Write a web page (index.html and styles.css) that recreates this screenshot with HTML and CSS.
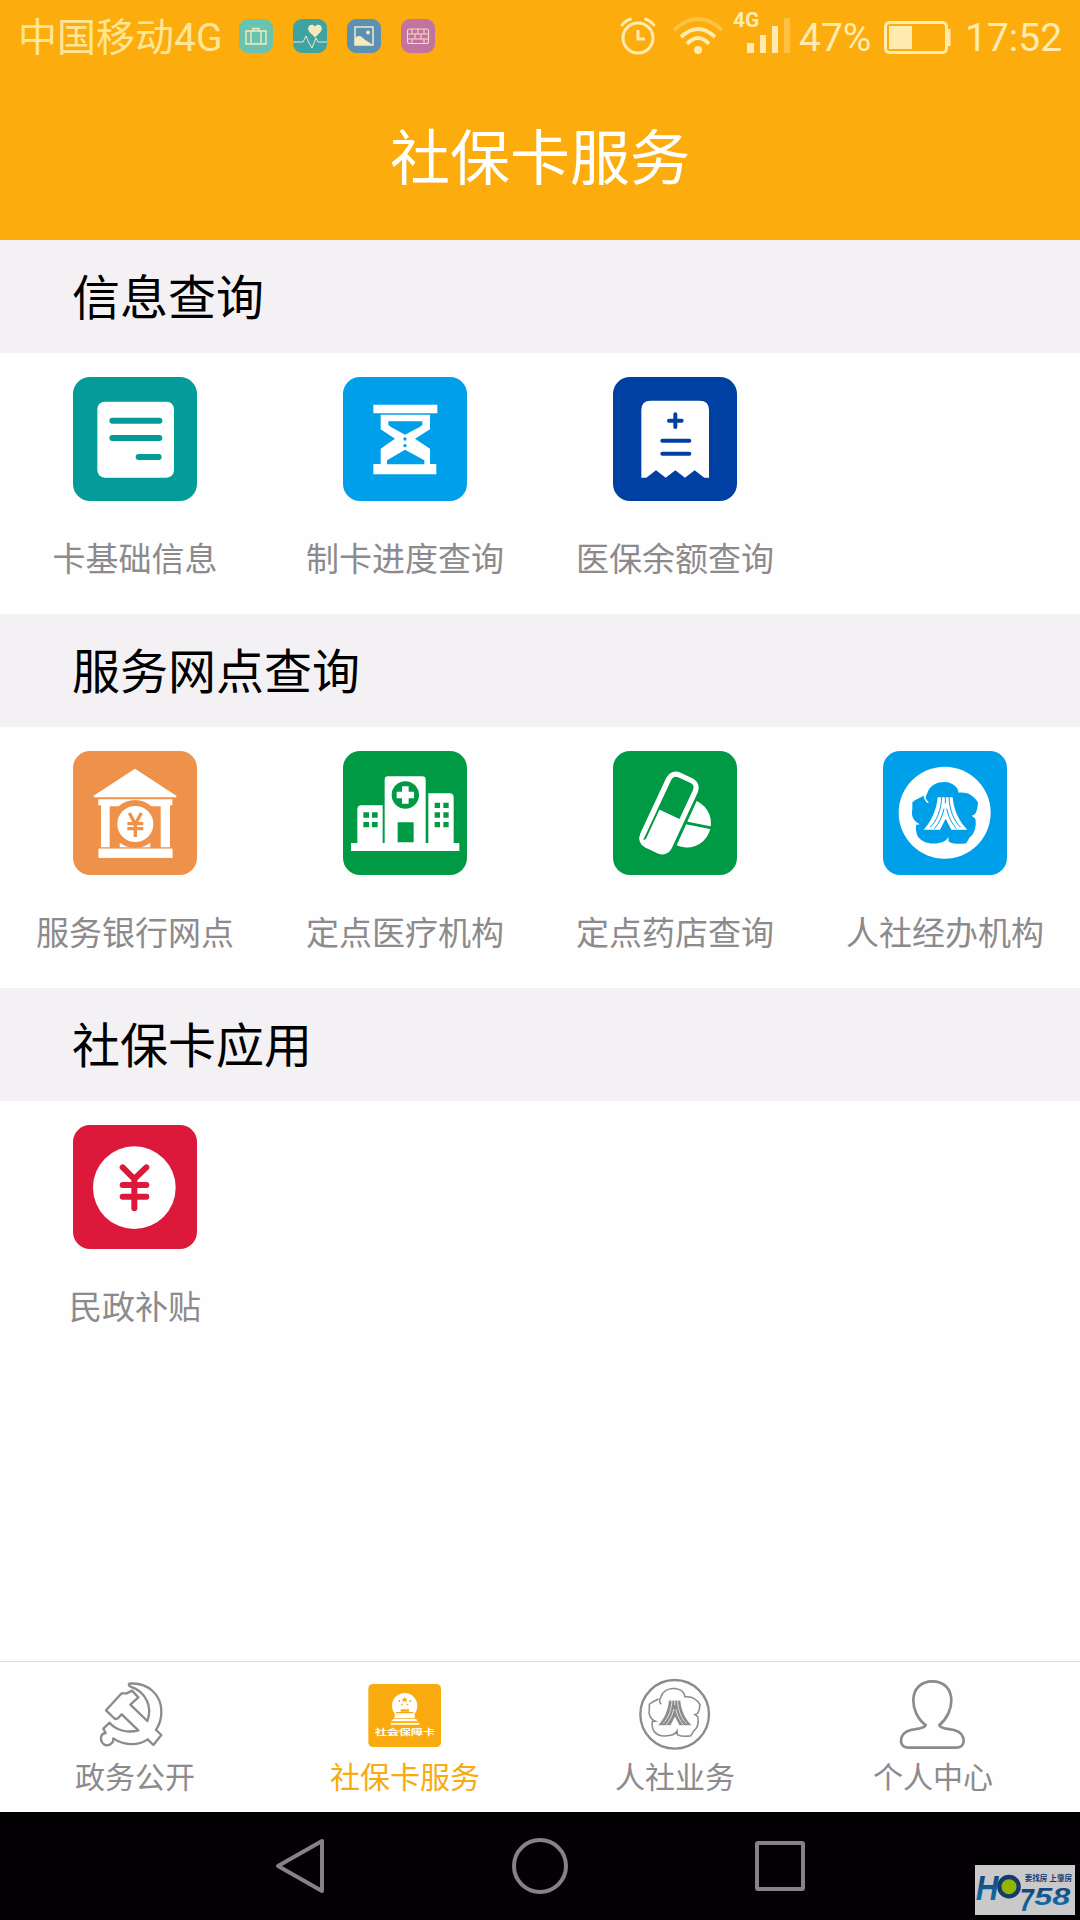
FILE: index.html
```
<!DOCTYPE html>
<html lang="zh-CN">
<head>
    <meta charset="UTF-8">
    <meta name="viewport" content="width=device-width, initial-scale=1.0">
    <title>社保卡服务</title>
    <link rel="stylesheet" href="styles.css">
</head>
<body>

    <!-- 公用图形 -->
    <svg class="defs" width="0" height="0">
        <symbol id="flower" viewBox="0 0 372 372" overflow="visible">
            <path d="M133 153 C125 143 126 134 131 128 C139 98 166 90 189 92 C207 95 224 106 226 124 C248 121 270 129 285 155 C281 161 284 169 280 177 C278 187 273 192 265 193 L276 202 C280 225 274 247 259 258 L249 276 C231 279 209 278 196 271 L195 257 C190 267 182 272 170 274 C145 280 118 277 103 255 C98 242 96 229 99 220 L110 219 C89 209 83 193 87 172 L87 153 C97 143 110 141 122 132"/>
        </symbol>
        <symbol id="mountain" viewBox="0 0 372 372" overflow="visible">
            <path d="M163 138 H208 C211 174 226 210 252 235 H204 L187 202 L170 235 H121 C145 210 160 174 163 138Z"/>
            <path class="ridge" d="M175 137 C174 175 160 210 140 228 M197 137 C198 175 212 210 232 228 M186 137 V156 M182 172 C176 200 165 217 153 232 M190 172 C196 200 207 217 219 232"/>
        </symbol>
    </svg>

    <!-- 顶部 -->
    <header>
        <div class="status-bar">
            <span class="carrier">中国移动4G</span>
            <div class="notices">
                <svg viewBox="0 0 34 34">
                    <rect width="34" height="34" rx="9" fill="#68c4b0"/>
                    <path d="M7 12h20v13H7z M12 12v13 M22 12v13 M14 12v-2.500h6v2.500" fill="none" stroke="#f5e9bd" stroke-width="1.400"/>
                </svg>
                <svg viewBox="0 0 34 34">
                    <rect width="34" height="34" rx="9" fill="#3fa3a4"/>
                    <path d="M22 18.500 L16.500 13 C12.500 8 18.500 3 22 7.500 C25.500 3 31.500 8 27.500 13Z" fill="#f5e9bd"/>
                    <path d="M0 23h10l3-6 3 7 3 5 4-10 2 4h9" fill="none" stroke="#f5e9bd" stroke-width="1"/>
                </svg>
                <svg viewBox="0 0 34 34">
                    <rect width="34" height="34" rx="9" fill="#5b91b5"/>
                    <rect x="8" y="8" width="18" height="18" fill="none" stroke="#f5e9bd" stroke-width="1.500"/>
                    <path d="M8 26v-7c4-4 7-1 9 1l9 6z" fill="#f5e9bd"/>
                    <circle cx="21" cy="13.500" r="1.900" fill="#f5e9bd"/>
                </svg>
                <svg viewBox="0 0 34 34">
                    <rect width="34" height="34" rx="9" fill="#c274a0"/>
                    <path d="M8.500 10h17q2 0 2 2v10.500q0 2-2 2h-17q-2 0-2-2V12q0-2 2-2z M6.500 15h21 M6.500 20h21 M11 10v5 M17 10v5 M23 10v5 M14 15v5 M20 15v5 M11 20v4.500 M23 20v4.500" fill="none" stroke="#f7d9c4" stroke-width="1.100"/>
                </svg>
            </div>
            <div class="status-right">
                <svg class="alarm" viewBox="0 0 36 38" fill="none" stroke="#ffebb0" stroke-width="3">
                    <circle cx="18" cy="21" r="15"/>
                    <path d="M18 13v9h7" stroke-width="3"/>
                    <path d="M1.500 9 Q5 3.500 11.500 1.800 M34.500 9 Q31 3.500 24.500 1.800"/>
                </svg>
                <svg class="wifi" viewBox="0 0 50 38" fill="none" stroke="#ffebb0" stroke-width="4">
                    <path d="M1 13 Q25-9 49 13" opacity=".35"/>
                    <path d="M8 20 Q25 4 42 20"/>
                    <path d="M14 27 Q25 15 36 27"/>
                    <circle cx="25" cy="33" r="4" fill="#ffebb0" stroke="none"/>
                </svg>
                <div class="signal">
                    <span>4G</span>
                    <svg viewBox="0 0 46 38" fill="#ffebb0">
                        <rect x="1" y="26" width="7" height="10"/>
                        <rect x="14" y="18" width="6" height="18"/>
                        <rect x="26" y="9" width="6" height="27"/>
                        <rect x="38" y="1" width="6" height="35" opacity=".35"/>
                    </svg>
                </div>
                <span class="percent">47%</span>
                <svg class="battery" viewBox="0 0 68 34">
                    <rect x="1.500" y="1.500" width="61" height="30" rx="4" fill="none" stroke="#ffebb0" stroke-width="3"/>
                    <rect x="5" y="5" width="23" height="23" fill="#ffebb0"/>
                    <path d="M64 8h2.500v17H64z" fill="#ffebb0"/>
                </svg>
                <span class="time">17:52</span>
            </div>
        </div>
        <h1>社保卡服务</h1>
    </header>

    <!-- 内容 -->
    <main>
        <h2>信息查询</h2>
        <div class="menu">
            <a class="item">
                <svg class="tile teal" viewBox="-1 -2 372 372">
                    <rect x="72" y="72" width="230" height="228" rx="22" fill="#fff"/>
                    <path d="M117 129H258 M117 181H258 M196 238H256" stroke="#049c98" stroke-width="18" stroke-linecap="round"/>
                </svg>
                <span>卡基础信息</span>
            </a>
            <a class="item">
                <svg class="tile blue" viewBox="-1 -2 372 372">
                    <path d="M90 81h192v26H90z M90 259h189v31H90z M112 111H260V155L215 183L260 213V259H112V213L155 183L112 155z" fill="#fff"/>
                    <path d="M135 131H237V142L229 148L185 171L143 148L135 142z M131 260V248L185 216L243 248V260z" fill="#009fe9"/>
                    <circle cx="185" cy="184" r="5" fill="#009fe9"/>
                    <circle cx="185" cy="204" r="5" fill="#009fe9"/>
                </svg>
                <span>制卡进度查询</span>
            </a>
            <a class="item">
                <svg class="tile navy" viewBox="-2 -2 372 372">
                    <path d="M83 300V97q0-28 28-28H258q28 0 28 28V300H272L243 278L214 300L185 278L156 300L127 278L98 300z" fill="#fff"/>
                    <path d="M185 110V148 M166 129H204 M146 189H227 M146 228H227" stroke="#0040a3" stroke-width="12" stroke-linecap="round"/>
                </svg>
                <span>医保余额查询</span>
            </a>
        </div>

        <h2>服务网点查询</h2>
        <div class="menu">
            <a class="item">
                <svg class="tile orange" viewBox="-2 -2 372 372">
                    <path d="M184 51L308 132V137H60V132z M74 143H296V161H289V287H261V164H108V287H82V161H74z M75 291H296V318H75z M138 287V275H230V287z" fill="#fff"/>
                    <circle cx="184" cy="217" r="72" fill="#ee914a"/>
                    <path d="M75 291H296V318H75z" fill="#fff"/>
                    <circle cx="185" cy="217" r="54" fill="#fff"/>
                    <path d="M167 184L185 217L203 184 M185 214V256 M161 216H209 M161 231H209" fill="none" stroke="#ee914a" stroke-width="10"/>
                </svg>
                <span>服务银行网点</span>
            </a>
            <a class="item">
                <svg class="tile green" viewBox="-1 -1 372 372">
                    <path d="M23 275H42V174q0-12 12-12H118V275H124V85q0-10 10-10H237q10 0 10 10V275H255V126H319q12 0 12 12V275H348V299H23z" fill="#fff"/>
                    <circle cx="186" cy="131" r="41" fill="#009a44"/>
                    <path d="M186 105V157 M160 131H212" stroke="#fff" stroke-width="20"/>
                    <path d="M163 213h48v60h-48z M60 183h17v16H60z M86 183h17v16H86z M60 212h17v16H60z M86 212h17v16H86z M274 154h16v16h-16z M300 154h16v16h-16z M274 183h16v16h-16z M300 183h16v16h-16z M274 212h16v16h-16z M300 212h16v16h-16z" fill="#009a44"/>
                </svg>
                <span>定点医疗机构</span>
            </a>
            <a class="item">
                <svg class="tile green" viewBox="-1 -1 372 372">
                    <path d="M250 149A72 72 0 0 1 190 282z" fill="#fff"/>
                    <path d="M215 214L305 232" stroke="#009a44" stroke-width="8"/>
                    <g transform="translate(167 185) rotate(25)">
                        <rect x="-52" y="-124" width="104" height="248" rx="31" fill="#fff"/>
                        <path d="M-36 3V-92q0-17 17-17H19q17 0 17 17V3z M-36 0h6V98q-1 7-6 7z" fill="#009a44"/>
                    </g>
                </svg>
                <span>定点药店查询</span>
            </a>
            <a class="item">
                <svg class="tile blue" viewBox="-1 -1 372 372">
                    <circle cx="184" cy="184" r="138" fill="#fff"/>
                    <use href="#flower" width="372" height="372" fill="#009fe9"/>
                    <path d="M122 131C124 141 129 150 135 154" fill="none" stroke="#fff" stroke-width="4"/>
                    <use class="on-blue" href="#mountain" width="372" height="372" fill="#fff"/>
                </svg>
                <span>人社经办机构</span>
            </a>
        </div>

        <h2>社保卡应用</h2>
        <div class="menu">
            <a class="item">
                <svg class="tile red" viewBox="-2 -2 372 372">
                    <circle cx="182" cy="186" r="124" fill="#fff"/>
                    <path d="M147 125L182 160L218 125 M182 160V248 M147 178H218 M147 213H218" fill="none" stroke="#dc183b" stroke-width="18" stroke-linecap="round"/>
                </svg>
                <span>民政补贴</span>
            </a>
        </div>
    </main>

    <!-- 底部菜单 -->
    <footer>
        <a class="tab">
            <svg viewBox="0 0 222 216" fill="none" stroke="#8c8a8c" stroke-width="7" stroke-linejoin="round">
                <path d="M46 181C77 203 121 204 149 184L166 201L190 171L174 156C184 141 190 123 190 103C192 52 150 12 94 17Q90 21 96 25C147 42 163 89 148 129L97 80L121 58L102 38L86 46L71 46L24 97L51 123L60 121L71 109L121 157C84 167 51 154 35 134L16 152L23 165C15 166 9 171 9 180C8 191 15 201 26 202C37 202 47 194 46 181Z"/>
            </svg>
            <span>政务公开</span>
        </a>
        <a class="tab active">
            <svg viewBox="0 0 222 216">
                <rect x="1" y="18" width="218" height="189" rx="14" fill="#f8aa0f"/>
                <circle cx="110" cy="83" r="38" fill="#fff"/>
                <path d="M80 104H140V120H80z M76 122H144L150 132H70z M68 135H154V140H68z" fill="#fff"/>
                <path d="M84 104H136 M72 132H148" stroke="#f8aa0f" stroke-width="4"/>
                <path d="M110 56l3 6h7l-5 4 2 7-7-4-7 4 2-7-5-4h7z M91 67h5v5h-5z M124 67h5v5h-5z M100 77h5v5h-5z M116 77h5v5h-5z M98 94h25v7H98z" fill="#f8aa0f"/>
                <text x="21" y="172" class="card-text" textLength="180" lengthAdjust="spacingAndGlyphs">社会保障卡</text>
            </svg>
            <span>社保卡服务</span>
        </a>
        <a class="tab">
            <svg viewBox="0 0 222 216">
                <circle cx="110" cy="109" r="103" fill="none" stroke="#8c8a8c" stroke-width="7"/>
                <g transform="translate(-33 -39) scale(.77)">
                    <use href="#flower" width="372" height="372" fill="none" stroke="#8c8a8c" stroke-width="6"/>
                    <use class="on-white" href="#mountain" width="372" height="372" fill="#8c8a8c"/>
                </g>
            </svg>
            <span>人社业务</span>
        </a>
        <a class="tab last">
            <svg viewBox="0 0 222 216" fill="none" stroke="#8c8a8c" stroke-width="8">
                <path d="M89 141C63 122 52 91 52 68C52 32 75 10 109 10C143 10 166 32 166 68C166 91 154 122 130 141Q131 147 146 151L174 156C194 161 203 175 203 190C203 202 194 209 180 209H38C24 209 15 202 15 190C15 175 24 161 44 156L72 151Q87 147 89 141Z"/>
            </svg>
            <span>个人中心</span>
        </a>
    </footer>

    <!-- 系统导航键 -->
    <nav>
        <svg viewBox="0 0 56 60"><path d="M6 30L50 5V55Z"/></svg>
        <svg viewBox="0 0 56 60"><circle cx="28" cy="30" r="26"/></svg>
        <svg viewBox="0 0 56 60"><rect x="5" y="7" width="46" height="46" rx="1"/></svg>
        <svg class="logo" viewBox="0 0 300 150">
            <defs>
                <linearGradient id="logoBlue" x1="0" y1="0" x2="0" y2="1">
                    <stop offset="0" stop-color="#153a6f"/>
                    <stop offset="1" stop-color="#0f78b4"/>
                </linearGradient>
            </defs>
            <text class="logo-h" x="2" y="104" textLength="68" lengthAdjust="spacingAndGlyphs">H</text>
            <circle cx="102" cy="65" r="29" fill="#93b400" stroke="#153a6f" stroke-width="13"/>
            <text class="logo-7" x="134" y="138" textLength="42" lengthAdjust="spacingAndGlyphs">7</text>
            <text class="logo-58" x="178" y="119" textLength="108" lengthAdjust="spacingAndGlyphs">58</text>
            <text class="logo-text" x="149" y="47" textLength="142" lengthAdjust="spacingAndGlyphs">要找房 上肇房</text>
        </svg>
    </nav>

</body>
</html>
```

FILE: styles.css
```
* {
    box-sizing: border-box;
}
body {
    font-family: Roboto, "Noto Sans CJK SC", sans-serif;
    margin: 0;
    padding: 0;
    height: 1920px;
    display: flex;
    flex-direction: column;
    background-color: #fefefe;
    overflow: hidden;
}
svg {
    display: block;
    flex-shrink: 0;
}
.defs {
    position: absolute;
}
header {
    height: 240px;
    background-color: #fcac0c;
    color: white;
}
.status-bar {
    display: flex;
    align-items: center;
    height: 72px;
    padding: 0 18px;
    color: #ffebb0;
    line-height: 72px;
    white-space: nowrap;
}
.carrier {
    font-size: 39px;
    width: 221px;
    padding-top: 4px;
    color: #ffe696;
}
.notices {
    display: flex;
    gap: 20px;
}
.notices svg {
    width: 34px;
    height: 34px;
}
.status-right {
    display: flex;
    align-items: center;
    margin-left: auto;
}
.alarm {
    width: 36px;
    height: 38px;
    margin-right: 17px;
}
.wifi {
    width: 50px;
    height: 38px;
    margin-right: 23px;
}
.signal {
    position: relative;
    width: 46px;
    margin-right: 7px;
}
.signal svg {
    width: 46px;
    height: 38px;
}
.signal span {
    position: absolute;
    left: -13px;
    top: -7px;
    font-size: 21px;
    font-weight: 700;
    line-height: 20px;
}
.percent {
    width: 85px;
    padding-top: 4px;
    font-size: 39px;
}
.battery {
    width: 68px;
    height: 34px;
    margin: 3px 13px 0 0;
}
.time {
    width: 97px;
    padding-top: 4px;
    font-size: 39px;
}
h1 {
    margin: 0;
    font-size: 60px;
    font-weight: 400;
    line-height: 88px;
    padding-top: 44px;
    text-align: center;
}
main {
    flex: 1;
}
h2 {
    margin: 0;
    height: 113px;
    padding-left: 72px;
    background-color: #f3f1f4;
    color: #000;
    font-size: 48px;
    font-weight: 400;
    line-height: 118px;
}
.menu {
    display: grid;
    grid-template-columns: repeat(4, 1fr);
    height: 261px;
    padding-top: 24px;
}
.item {
    display: flex;
    flex-direction: column;
    align-items: center;
    color: #8c8a8c;
    font-size: 33px;
    line-height: 48px;
}
.item span {
    margin-top: 35px;
}
.tile {
    width: 124px;
    height: 124px;
    border-radius: 17px;
}
.teal {
    background-color: #049c98;
}
.blue {
    background-color: #009fe9;
}
.navy {
    background-color: #0040a3;
}
.orange {
    background-color: #ee914a;
}
.green {
    background-color: #009a44;
}
.red {
    background-color: #dc183b;
}
.ridge {
    fill: none;
    stroke-width: 3;
}
.on-blue {
    stroke: #009fe9;
    stroke-width: 0;
}
.on-white {
    stroke: #fefefe;
}
footer {
    display: grid;
    grid-template-columns: repeat(4, 1fr);
    height: 151px;
    border-top: 1px solid #d9dedd;
}
.tab {
    display: flex;
    flex-direction: column;
    align-items: center;
    padding-top: 16px;
    color: #8c8a8c;
    font-size: 30px;
    line-height: 44px;
}
.tab.last {
    padding-right: 24px;
}
.tab.active {
    color: #f8aa0f;
}
.tab svg {
    width: 74px;
    height: 72px;
    margin-bottom: 6px;
}
.card-text {
    font-size: 23px;
    font-weight: 700;
    fill: #fff;
}
nav {
    position: relative;
    display: flex;
    justify-content: center;
    gap: 184px;
    height: 108px;
    padding-top: 24px;
    background-color: #030104;
}
nav svg {
    width: 56px;
    height: 60px;
    fill: none;
    stroke: #858385;
    stroke-width: 4;
    stroke-linejoin: round;
}
nav .logo {
    position: absolute;
    right: 5px;
    bottom: 5px;
    width: 100px;
    height: 50px;
    background-color: #c9c9c9;
    stroke: none;
}
.logo text {
    font-family: "Liberation Sans", "Noto Sans CJK SC", sans-serif;
    font-weight: 700;
    font-style: italic;
    fill: url(#logoBlue);
}
.logo-h {
    font-size: 104px;
}
.logo-7 {
    font-size: 94px;
}
.logo-58 {
    font-size: 72px;
}
.logo .logo-text {
    font-size: 23px;
    font-style: normal;
    fill: #153a6f;
}
```
